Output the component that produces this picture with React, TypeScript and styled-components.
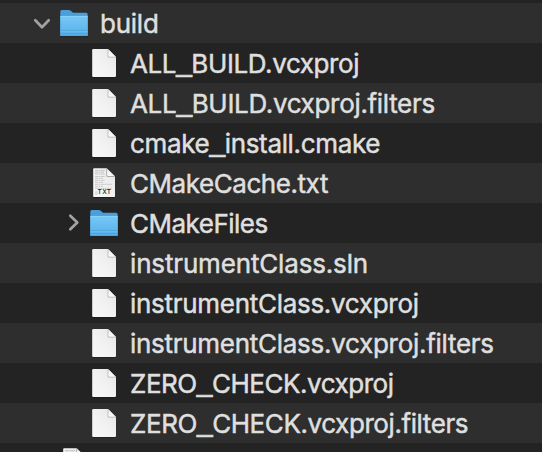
import React from "react";
import styled, { createGlobalStyle } from "styled-components";

const GlobalStyle = createGlobalStyle`
  body { margin: 0; background: #232323; }
`;

const FileTree = styled.main`
  box-sizing: border-box;
  width: 542px;
  height: 452px;
  padding-top: 3px;
  overflow: hidden;
  background: #232323;
  color: #dfdfdf;
  font-family: Inter, "Liberation Sans", sans-serif;
  font-size: 26px;
  font-weight: 400;
`;

const Row = styled.div<{ $depth: number }>`
  display: flex;
  align-items: center;
  box-sizing: border-box;
  height: 40px;
  padding-left: ${({ $depth }) => 28 + $depth * 30}px;
  &:nth-child(odd) { background: #2e2e2e; }
  &:nth-child(even) { background: #232323; }
`;

const Disclosure = styled.span`
  display: flex;
  flex: none;
  width: 28px;
  height: 40px;
`;

const IconSlot = styled.span`
  display: flex;
  flex: none;
  width: 36px;
  height: 40px;
  margin-right: 8px;
`;

const Label = styled.span<{ $tracking: number }>`
  height: 40px;
  line-height: 42px;
  white-space: pre;
  letter-spacing: ${({ $tracking }) => $tracking}px;
  -webkit-text-stroke: 0.5px #dfdfdf;
`;

const Underscore = styled.span`
  font-family: "Liberation Sans", sans-serif;
  font-size: 28px;
  line-height: 0;
  vertical-align: 2px;
  -webkit-text-stroke: 0.7px #dfdfdf;
`;

const Chevron = ({ open }: { open?: boolean }) => (
  <svg width="28" height="40" viewBox="0 0 28 40" fill="none" stroke="#a2a2a2" strokeWidth="2.7" strokeLinecap="round" strokeLinejoin="round">
    <path d={open ? "M7.3 17.3 L14 24.2 L20.7 17.3" : "M12.3 12.7 L19.3 19.5 L12.3 26.3"} />
  </svg>
);

const Folder = () => (
  <svg width="36" height="40" viewBox="0 0 36 40">
    <defs>
      <linearGradient id="folderFront" x1="0" y1="0" x2="0" y2="1">
        <stop offset="0" stopColor="#76c8f6" />
        <stop offset="1" stopColor="#57b0e8" />
      </linearGradient>
    </defs>
    <path d="M4 33.5H32V34.3H4Z" fill="#181c1f" />
    <path d="M4.3 8.5Q4.3 7 5.8 7H12.5Q14 7 15 8L17 9.8H30.2Q31.7 9.8 31.7 11.4V32Q31.7 33 30.7 33H5.3Q4.3 33 4.3 32Z" fill="#4a9fd8" />
    <path d="M4.3 13H31.7V32Q31.7 33 30.7 33H5.3Q4.3 33 4.3 32Z" fill="url(#folderFront)" />
    <path d="M4.3 13.4H31.7" stroke="#8bd5fa" strokeWidth=".8" />
    <path d="M4.3 27.5H31.7M4.3 30.5H31.7" stroke="#459bd4" strokeWidth="0.6" />
    <path d="M4.3 28.3H31.7" stroke="#72c0ed" strokeWidth="0.7" />
    <path d="M4.5 32.6H31.5" stroke="#459bd4" strokeWidth="0.7" />
  </svg>
);

const PaperPaint = () => (
  <defs>
    <linearGradient id="paper" x1="0" y1="1" x2="1" y2="0">
      <stop offset="0" stopColor="#f9f9f9" />
      <stop offset="0.55" stopColor="#f0f0f0" />
      <stop offset="1" stopColor="#e5e5e5" />
    </linearGradient>
    <linearGradient id="fold" x1="0" y1="1" x2="1" y2="0">
      <stop offset="0" stopColor="#ffffff" />
      <stop offset="1" stopColor="#e6e6e6" />
    </linearGradient>
  </defs>
);

const Doc = () => (
  <svg width="36" height="40" viewBox="0 0 36 40">
    <PaperPaint />
    <path d="M7 33.8H29V34.5H7Z" fill="#151515" />
    <path d="M6.2 7.2Q6.2 6 7.4 6H22L30 14V32.8Q30 34 28.8 34H7.4Q6.2 34 6.2 32.8Z" fill="url(#paper)" />
    <path d="M21.6 6V13.2Q21.6 14.6 23 14.6H30V14L22 6Z" fill="#b2b2b2" />
    <path d="M22.4 6.4V12.6Q22.4 13.7 23.5 13.7H29.7Z" fill="url(#fold)" />
  </svg>
);

const TextDoc = () => (
  <svg width="36" height="40" viewBox="0 0 36 40">
    <PaperPaint />
    <path d="M8 34H28V34.7H8Z" fill="#151515" />
    <path d="M7.2 6Q7.2 5.3 8 5.3H20.7L29 13.5V33.3Q29 34 28.2 34H8Q7.2 34 7.2 33.3Z" fill="url(#paper)" />
    <path d="M9 7.5H19M9 9.2H18M9 11H19M9 13.5H19M9 15.3H17M9 17.3H19M9 19.3H17M9 21.3H26M9 23.3H17M9 25.3H26M9 29H12M9 31H12" stroke="#bdbdbd" strokeWidth=".8" strokeDasharray="3 .4 2 .5" />
    <path d="M20.2 5.3V12.6Q20.2 14 21.6 14H29V13.5L20.7 5.3Z" fill="#acacac" />
    <path d="M21.2 5.9V12Q21.2 13.1 22.3 13.1H28.5Z" fill="url(#fold)" />
  </svg>
);

const TextDocSlot = styled.span`
  position: relative;
  display: flex;
`;

const FormatTag = styled.span`
  position: absolute;
  left: 6px;
  top: 25px;
  width: 25px;
  text-align: center;
  font-size: 6.5px;
  line-height: 8px;
  font-weight: 500;
  letter-spacing: 0.4px;
  color: #252525;
`;

type Entry = {
  name: string;
  depth: number;
  kind: "folder" | "file" | "text";
  open?: boolean;
  tracking: number;
};

const entries: Entry[] = [
  { name: "build", depth: 0, kind: "folder", open: true, tracking: -0.25 },
  { name: "ALL_BUILD.vcxproj", depth: 1, kind: "file", tracking: -0.39 },
  { name: "ALL_BUILD.vcxproj.filters", depth: 1, kind: "file", tracking: -0.32 },
  { name: "cmake_install.cmake", depth: 1, kind: "file", tracking: -0.33 },
  { name: "CMakeCache.txt", depth: 1, kind: "text", tracking: -0.44 },
  { name: "CMakeFiles", depth: 1, kind: "folder", tracking: -0.5 },
  { name: "instrumentClass.sln", depth: 1, kind: "file", tracking: -0.16 },
  { name: "instrumentClass.vcxproj", depth: 1, kind: "file", tracking: -0.29 },
  { name: "instrumentClass.vcxproj.filters", depth: 1, kind: "file", tracking: -0.28 },
  { name: "ZERO_CHECK.vcxproj", depth: 1, kind: "file", tracking: -0.46 },
  { name: "ZERO_CHECK.vcxproj.filters", depth: 1, kind: "file", tracking: -0.41 },
  { name: "", depth: 0, kind: "text", tracking: 0 },
];

const EntryIcon = ({ kind, name }: Pick<Entry, "kind" | "name">) => {
  if (kind === "folder") return <Folder />;
  if (kind === "file") return <Doc />;
  return (
    <TextDocSlot>
      <TextDoc />
      {name && <FormatTag>TXT</FormatTag>}
    </TextDocSlot>
  );
};

export default function App() {
  return (
    <>
      <GlobalStyle />
      <FileTree>
        {entries.map(({ name, depth, kind, open, tracking }) => (
          <Row key={name} $depth={depth}>
            <Disclosure>{kind === "folder" && <Chevron open={open} />}</Disclosure>
            <IconSlot><EntryIcon kind={kind} name={name} /></IconSlot>
            <Label $tracking={tracking}>
              {name.split("_").map((part, index) => (
                <React.Fragment key={index}>
                  {index > 0 && <Underscore>_</Underscore>}
                  {part}
                </React.Fragment>
              ))}
            </Label>
          </Row>
        ))}
      </FileTree>
    </>
  );
}
